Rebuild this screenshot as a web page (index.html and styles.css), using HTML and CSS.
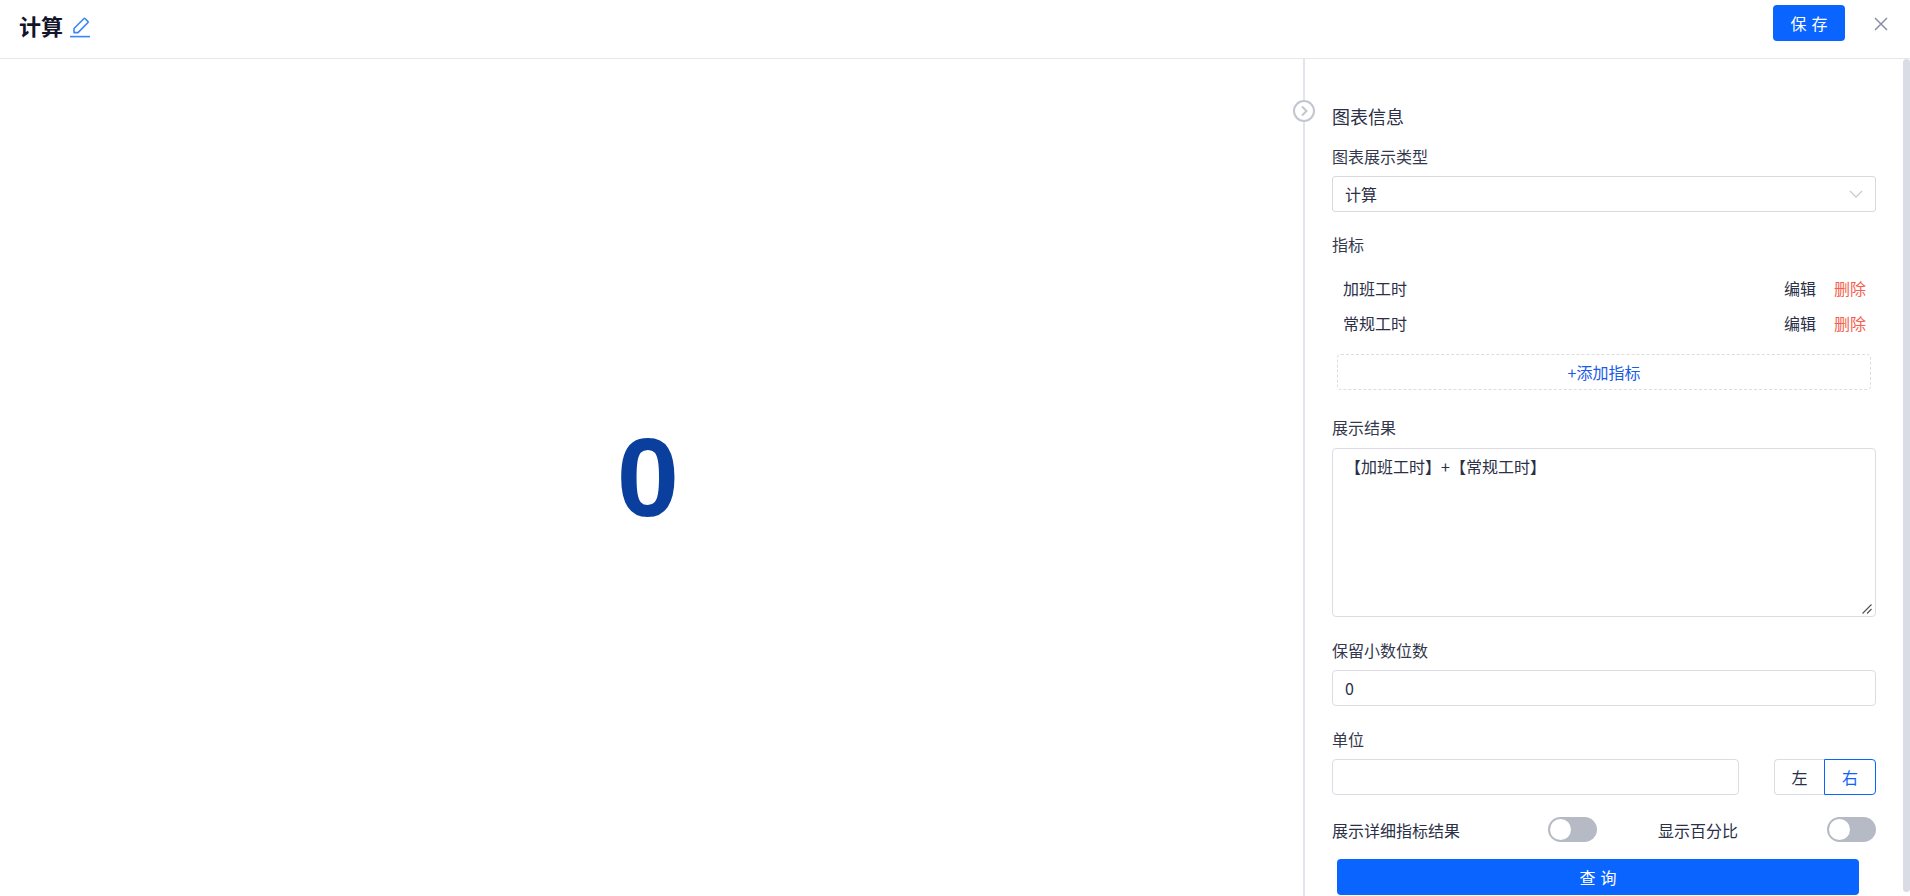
FILE: index.html
```html
<!DOCTYPE html>
<html lang="zh-CN">
<head>
    <meta charset="UTF-8">
    <meta name="viewport" content="width=device-width, initial-scale=1.0">
    <title>计算</title>
    <link rel="stylesheet" href="styles.css">
</head>
<body>
    <div class="page">
        <header class="topbar">
            <div class="topbar-title">
                <h1>计算</h1>
                <svg class="edit-icon" viewBox="0 0 20 21" fill="none" stroke="#3b86f7" stroke-width="1.6">
                    <path d="M4 11.5 13.8 1.8a1 1 0 0 1 1.4 0l2.6 2.6a1 1 0 0 1 0 1.4L8 15.6H4z" stroke-linejoin="round"/>
                    <path d="M0 19.6h20"/>
                </svg>
            </div>
            <div class="topbar-actions">
                <button class="btn-primary btn-save">保 存</button>
                <svg class="close-icon" viewBox="0 0 14 14" fill="none" stroke="#8a8fa3" stroke-width="1.5">
                    <path d="M1 1l12 12M13 1 1 13"/>
                </svg>
            </div>
        </header>

        <main class="content">
            <section class="chart">
                <div class="chart-value">0</div>
            </section>

            <aside class="sidebar">
                <div class="collapse-btn">
                    <svg viewBox="0 0 22 22" fill="none" stroke="#c3c6d1">
                        <circle cx="11" cy="11" r="10" stroke-width="2"/>
                        <path d="M9 6.5 13.5 11 9 15.5" stroke-width="2"/>
                    </svg>
                </div>

                <div class="form">
                    <h2 class="form-title">图表信息</h2>

                    <div class="field field-type">
                        <label>图表展示类型</label>
                        <div class="select">
                            <span>计算</span>
                            <svg class="select-arrow" viewBox="0 0 14 8" fill="none" stroke="#c9ccd4" stroke-width="1.3">
                                <path d="M1 1l6 6 6-6"/>
                            </svg>
                        </div>
                    </div>

                    <div class="field field-metrics">
                        <label>指标</label>
                        <ul class="metrics">
                            <li>
                                <span class="metric-name">加班工时</span>
                                <a class="link">编辑</a>
                                <a class="link link-danger">删除</a>
                            </li>
                            <li>
                                <span class="metric-name">常规工时</span>
                                <a class="link">编辑</a>
                                <a class="link link-danger">删除</a>
                            </li>
                        </ul>
                        <div class="add-metric">+添加指标</div>
                    </div>

                    <div class="field field-result">
                        <label>展示结果</label>
                        <div class="result-box">
                            <textarea class="result-input">【加班工时】+【常规工时】</textarea>
                            <svg class="resize-handle" viewBox="0 0 10 10" fill="none" stroke="#555" stroke-width="1.2">
                                <path d="M0.5 9.5 9.5 0.5M5 9.5 9.5 5"/>
                            </svg>
                        </div>
                    </div>

                    <div class="field">
                        <label>保留小数位数</label>
                        <input class="text-input" type="text" value="0">
                    </div>

                    <div class="field">
                        <label>单位</label>
                        <div class="unit-row">
                            <input class="text-input" type="text">
                            <div class="segmented">
                                <span class="segment">左</span>
                                <span class="segment segment-active">右</span>
                            </div>
                        </div>
                    </div>

                    <div class="switch-row">
                        <div class="switch-item switch-item-first">
                            <span>展示详细指标结果</span>
                            <span class="switch"></span>
                        </div>
                        <div class="switch-item">
                            <span>显示百分比</span>
                            <span class="switch"></span>
                        </div>
                    </div>

                    <button class="btn-primary btn-query">查 询</button>
                </div>
                <div class="scrollbar"></div>
            </aside>
        </main>
    </div>
</body>
</html>
```

FILE: styles.css
```css
* {
    box-sizing: border-box;
}
html, body {
    margin: 0;
    height: 100%;
    overflow: hidden;
}
body {
    background: #fff;
    color: #2b3047;
    font-family: "Noto Sans CJK SC", "Liberation Sans", sans-serif;
    font-size: 16px;
    line-height: 22px;
}
.page {
    display: flex;
    flex-direction: column;
    height: 896px;
}
.topbar {
    display: flex;
    justify-content: space-between;
    align-items: flex-start;
    flex: none;
    height: 59px;
    padding: 10px 22px 0 19px;
    border-bottom: 1px solid #e6e7eb;
}
.topbar-title {
    display: flex;
    align-items: center;
    gap: 7px;
}
.topbar-title h1 {
    margin: 0;
    color: #12152a;
    font-size: 22px;
    font-weight: 700;
    line-height: 30px;
}
.edit-icon {
    width: 20px;
    height: 21px;
    margin-top: 4px;
}
.topbar-actions {
    display: flex;
    align-items: center;
    gap: 29px;
    margin-top: -5px;
}
.close-icon {
    width: 14px;
    height: 14px;
    margin-top: 1px;
}
.btn-primary {
    border: none;
    border-radius: 4px;
    background: #0a64ff;
    color: #fff;
    font-family: inherit;
    font-size: 16px;
    line-height: 22px;
    word-spacing: 1.5px;
    cursor: pointer;
}
.btn-save {
    width: 72px;
    height: 36px;
}
.content {
    display: flex;
    flex: 1;
    min-height: 0;
}
.chart {
    display: flex;
    justify-content: center;
    align-items: center;
    flex: 1;
    padding-right: 7px;
}
.chart-value {
    color: #0a3f9e;
    font-family: "Liberation Sans", sans-serif;
    font-size: 112px;
    font-weight: 700;
    line-height: 1;
}
.sidebar {
    position: relative;
    display: flex;
    flex: none;
    width: 607px;
    border-left: 2px solid #e4e5ea;
}
.collapse-btn {
    position: absolute;
    top: 41px;
    left: -12px;
    width: 22px;
    height: 22px;
    background: #fff;
    border-radius: 50%;
}
.collapse-btn svg {
    display: block;
}
.form {
    flex: 1;
    padding: 44px 27px 0;
}
.form-title {
    margin: 0 0 16px;
    font-size: 18px;
    font-weight: 400;
    line-height: 26px;
}
.field {
    margin-bottom: 22px;
}
.field label {
    display: block;
    margin-bottom: 9px;
    color: #33384d;
}
.field-type {
    margin-bottom: 21px;
}
.field-metrics {
    margin-bottom: 26px;
}
.field-result label {
    margin-bottom: 10px;
}
.select, .text-input, .result-input {
    display: block;
    width: 100%;
    border: 1px solid #dcdde4;
    border-radius: 4px;
    background: #fff;
    color: inherit;
    font-family: inherit;
    font-size: 16px;
    line-height: 22px;
    outline: none;
}
.select {
    display: flex;
    justify-content: space-between;
    align-items: center;
    height: 36px;
    padding: 0 12px;
    border-color: #d9d9d9;
    border-radius: 3px;
}
.select-arrow {
    width: 14px;
    height: 8px;
}
.text-input {
    height: 36px;
    padding: 0 12px;
}
.metrics {
    margin: 15px 0 14px;
    padding: 0;
    list-style: none;
}
.metrics li {
    display: flex;
    align-items: center;
    height: 35px;
    padding: 0 10px 0 11px;
    gap: 18px;
}
.metric-name {
    flex: 1;
}
.link-danger {
    color: #f4604d;
}
.add-metric {
    height: 36px;
    margin: 0 5px;
    border: 1px dashed #dcdde1;
    border-radius: 4px;
    color: #1a5ce6;
    line-height: 34px;
    text-align: center;
}
.result-box {
    position: relative;
}
.result-input {
    height: 169px;
    padding: 6px 12px;
    resize: none;
}
.resize-handle {
    position: absolute;
    right: 4px;
    bottom: 3px;
    width: 10px;
    height: 10px;
}
.unit-row {
    display: flex;
    justify-content: space-between;
}
.unit-row .text-input {
    width: 407px;
}
.segmented {
    display: flex;
    height: 36px;
}
.segment {
    width: 50px;
    border: 1px solid #dcdde4;
    border-right: none;
    border-radius: 4px 0 0 4px;
    line-height: 34px;
    text-align: center;
}
.segment-active {
    width: 52px;
    border: 1px solid #0a64ff;
    border-radius: 0 4px 4px 0;
    color: #0a64ff;
}
.switch-row {
    display: flex;
    justify-content: space-between;
    margin-top: 22px;
}
.switch-item {
    display: flex;
    justify-content: space-between;
    align-items: center;
    width: 218px;
}
.switch-item-first {
    width: 265px;
}
.switch {
    position: relative;
    width: 49px;
    height: 25px;
    border-radius: 13px;
    background: #b6bac4;
}
.switch::after {
    content: "";
    position: absolute;
    top: 2px;
    left: 2px;
    width: 21px;
    height: 21px;
    border-radius: 50%;
    background: #fff;
}
.btn-query {
    display: block;
    width: 522px;
    height: 36px;
    margin: 17px 0 0 5px;
}
.scrollbar {
    flex: none;
    width: 7px;
    height: 833px;
    border-radius: 4px;
    background: #d9dce5;
}
```
